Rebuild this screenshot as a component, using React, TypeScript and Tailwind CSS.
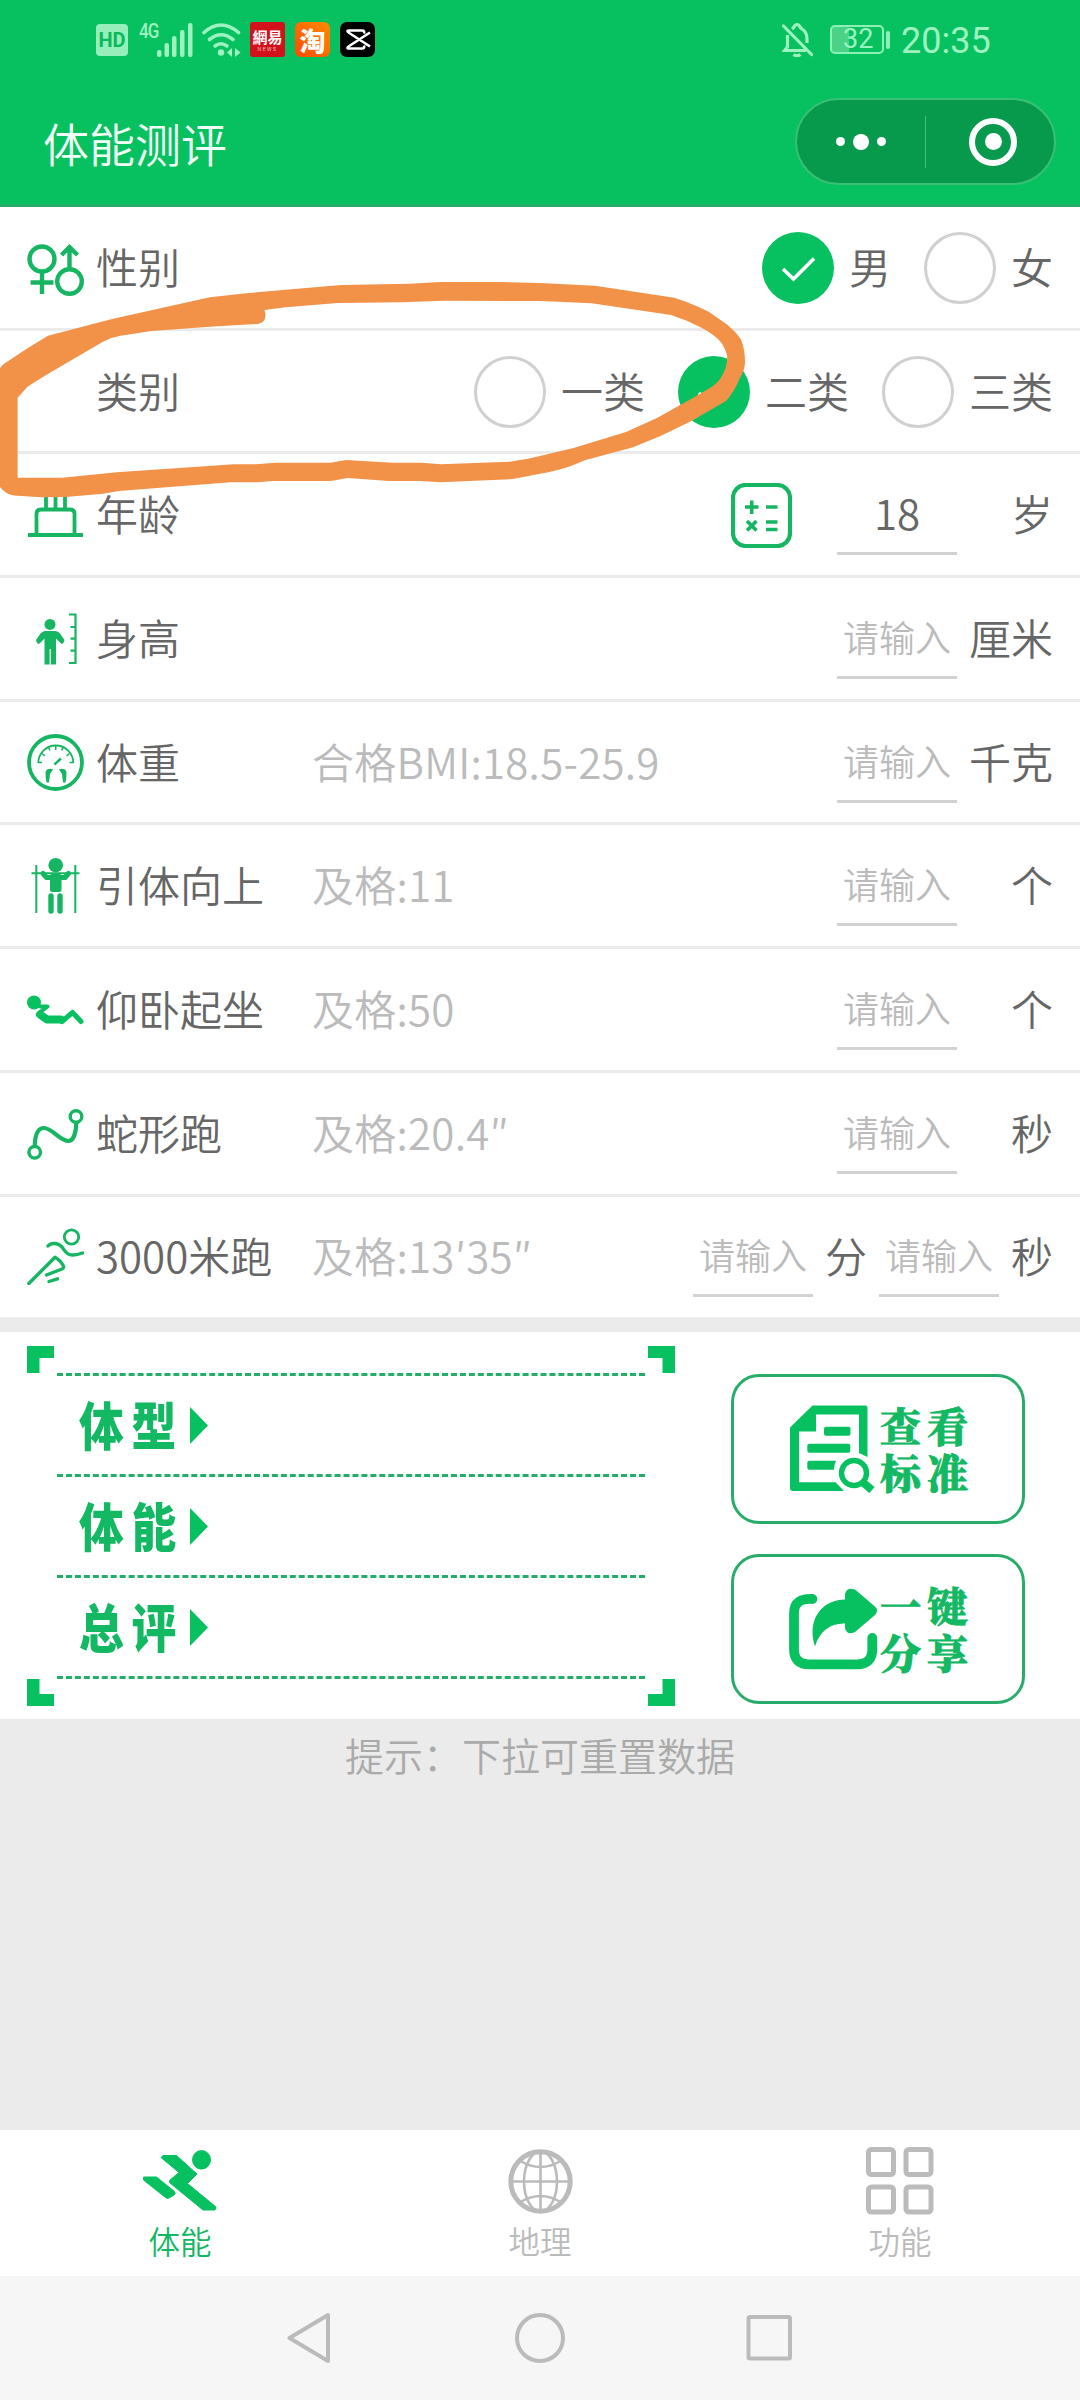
import { useState } from 'react'
import type { ReactNode } from 'react'

const GREEN = '#07c160'
const ICON_GREEN = '#16b562'

export default function App() {
  const [gender, setGender] = useState('男')
  const [category, setCategory] = useState('二类')

  return (
    <div className="relative flex h-[2400px] w-[1080px] flex-col overflow-hidden bg-[#ebebeb] font-['Noto_Sans_CJK_SC',sans-serif] text-[42px] leading-none font-[350] text-[#666]">
      <Header />

      {/* Form */}
      <div className="flex flex-col bg-white">
        <Row icon={<GenderIcon />} label="性别">
          <RadioGroup options={['男', '女']} value={gender} onChange={setGender} />
        </Row>
        <Row label="类别">
          <RadioGroup options={['一类', '二类', '三类']} value={category} onChange={setCategory} />
        </Row>
        <Row icon={<CakeIcon />} label="年龄">
          <CalculatorIcon />
          <Field value="18" />
          <Unit>岁</Unit>
        </Row>
        <Row icon={<HeightIcon />} label="身高">
          <Field />
          <Unit>厘米</Unit>
        </Row>
        <Row icon={<ScaleIcon />} label="体重" hint="合格BMI:18.5-25.9">
          <Field />
          <Unit>千克</Unit>
        </Row>
        <Row icon={<PullUpIcon />} label="引体向上" hint="及格:11">
          <Field />
          <Unit>个</Unit>
        </Row>
        <Row icon={<SitUpIcon />} label="仰卧起坐" hint="及格:50">
          <Field />
          <Unit>个</Unit>
        </Row>
        <Row icon={<SnakeIcon />} label="蛇形跑" hint="及格:20.4″">
          <Field />
          <Unit>秒</Unit>
        </Row>
        <Row icon={<RunIcon />} label="3000米跑" hint="及格:13′35″" last>
          <Field />
          <span className="mx-3 -mt-[3px]">分</span>
          <Field />
          <span className="-mt-[3px] ml-3">秒</span>
        </Row>
      </div>

      {/* Result + actions */}
      <div className="mt-[15px] flex h-[387px] items-start bg-white pt-3.5 pl-[27px]">
        <ResultPanel />
        <div className="mt-7 ml-14 flex flex-col gap-[30px]">
          <ActionButton icon={<DocumentIcon />} label="查看标准" />
          <ActionButton icon={<ShareIcon />} label="一键分享" />
        </div>
      </div>

      <p className="mt-[15px] text-center text-[39px] leading-[40px] text-[#aaa]">提示：下拉可重置数据</p>

      {/* Tab bar */}
      <div className="mt-auto grid h-[146px] shrink-0 grid-cols-3 bg-white text-[31.5px] text-[#bbb]">
        <Tab icon={<SprintIcon />} label="体能" active />
        <Tab icon={<GlobeIcon />} label="地理" />
        <Tab icon={<GridIcon />} label="功能" />
      </div>

      <SystemNav />
      <Scribble />
    </div>
  )
}

// ── Header ──────────────────────────────────────────────────────────────────

function Header() {
  return (
    <div className="flex h-[207px] shrink-0 flex-col border-b-[3px] border-[#25ad66] bg-[#07c160]">
      <div className="flex h-[79px] items-center pl-24 text-[#9df2c0]">
        <div className="flex h-8 w-8 items-center justify-center rounded-[4px] bg-[#96efba] font-['Roboto',sans-serif] text-[20px] font-bold text-[#0ab95c]">
          HD
        </div>
        <div className="ml-[11px] flex h-[34px] items-start">
          <span className="w-[18px] origin-left scale-x-[0.85] font-['Roboto',sans-serif] text-[20px] leading-[16px] font-medium tracking-[-1px]">
            4G
          </span>
          <svg width="36" height="34" viewBox="0 0 36 34" fill="currentColor">
            <rect x="0" y="27" width="4.5" height="7" rx="2" />
            <rect x="7.5" y="20" width="4.5" height="14" rx="2" />
            <rect x="15" y="13" width="4.5" height="21" rx="2" />
            <rect x="23" y="7" width="4.5" height="27" rx="2" />
            <rect x="31" y="0" width="4.5" height="34" rx="2" />
          </svg>
        </div>
        <svg className="ml-[9px]" width="40" height="34" viewBox="0 0 40 34" fill="none" stroke="currentColor" strokeWidth="3.6" strokeLinecap="round">
          <path d="M2 9.500Q19 -5.500 36.500 9.500" />
          <path d="M7.500 16.500Q19 7 31 16.500" />
          <path d="M13 23Q19 18.500 25 23" />
          <circle cx="19" cy="29.500" r="3.200" fill="currentColor" stroke="none" />
          <path d="M30 25V34L25 29.500ZM33 34V25L38.500 29.500Z" fill="currentColor" stroke="none" />
        </svg>
        <div className="ml-2 flex h-[35px] w-[35px] flex-col items-center justify-center rounded-[3px] bg-[#d2111b] text-white">
          <span className="text-[15px] leading-[18px] font-bold">網易</span>
          <span className="font-['Roboto',sans-serif] text-[5px] leading-[6px] tracking-[1.500px]">NEWS</span>
        </div>
        <div className="ml-2.5 flex h-[35px] w-[35px] items-center justify-center rounded-[6px] bg-gradient-to-tr from-[#ff4800] to-[#ff8a00] text-[26px] leading-[30px] font-black text-white">
          淘
        </div>
        <div className="ml-2.5 flex h-[35px] w-[35px] items-center justify-center rounded-[7px] bg-black">
          <svg width="27" height="21" viewBox="0 0 27 21" fill="none" stroke="#fff" strokeWidth="2.6" strokeLinejoin="round">
            <path d="M26 3.500L6 16.500Q1.500 19.500 5 19.500H18Q21 19.500 20 16.500M26 17.500L6 4.500Q1.500 1.500 5 1.500H18Q21 1.500 20 4.500" />
          </svg>
        </div>

        <svg className="ml-[407px]" width="31" height="34" viewBox="0 0 31 34" fill="none" stroke="currentColor" strokeWidth="3.2">
          <path d="M1.500 3L29.500 31.500" strokeLinecap="round" />
          <path d="M5.500 12V24L2.500 27.500H24" />
          <path d="M10 6Q12 4.500 12.500 3Q15 0 17.500 3Q18 4.500 20 6Q25 9 25 16V20" />
          <path d="M11.500 31.500Q15 34 18.500 31.500" />
        </svg>
        <div className="ml-[17px] flex h-[29px] w-[54px] items-center rounded-[5px] border-2 border-[#8df0b4] bg-gradient-to-r from-[#4ad287] from-35% to-transparent to-35% pl-[11px] font-['Roboto',sans-serif] text-[27px] font-normal">
          32
        </div>
        <div className="ml-0.5 h-[18px] w-[4px] rounded-[2px] bg-[#8df0b4]" />
        <span className="ml-[11px] pt-0.5 font-['Roboto',sans-serif] text-[36px] font-normal">20:35</span>
      </div>

      <div className="flex h-[125px] items-center justify-between pr-6 pl-[43px]">
        <h1 className="text-[46px] text-[#f2fff7]">体能测评</h1>
        <div className="flex h-[87px] w-[261px] items-center rounded-full border-2 border-[#38c075] bg-[#079a4c]">
          <div className="flex w-[128px] items-center justify-center gap-[8px]">
            <span className="h-[9px] w-[9px] rounded-full bg-white" />
            <span className="h-4 w-4 rounded-full bg-white" />
            <span className="h-[9px] w-[9px] rounded-full bg-white" />
          </div>
          <div className="h-[52px] w-px bg-[#4fb87e]" />
          <div className="ml-[43px] flex h-12 w-12 items-center justify-center rounded-full border-[6px] border-white">
            <span className="h-[17px] w-[17px] rounded-full bg-white" />
          </div>
        </div>
      </div>
    </div>
  )
}

// ── Form rows ───────────────────────────────────────────────────────────────

interface RowProps {
  icon?: ReactNode
  label: string
  hint?: string
  last?: boolean
  children: ReactNode
}

function Row({ icon, label, hint, last, children }: RowProps) {
  return (
    <div
      className={
        last
          ? 'flex h-[120.600px] items-center px-[27px]'
          : 'flex h-[123.700px] items-center border-b-[3px] border-[#ebebeb] px-[27px]'
      }
    >
      <div className="h-[57px] w-[57px]">{icon}</div>
      <span className="-mt-[3px] ml-3 w-[216px] whitespace-nowrap">{label}</span>
      <span className="-mt-[3px] tracking-[0.25px] whitespace-nowrap text-[#bbb]">{hint}</span>
      <div className="ml-auto flex items-center">{children}</div>
    </div>
  )
}

interface RadioGroupProps {
  options: string[]
  value: string
  onChange: (value: string) => void
}

function RadioGroup({ options, value, onChange }: RadioGroupProps) {
  return (
    <div className="flex gap-[33px] pt-0.5">
      {options.map((option) => (
        <button key={option} onClick={() => onChange(option)} className="flex items-center gap-[15px]">
          {option === value ? (
            <span className="h-[72px] w-[72px] rounded-full bg-[#07c160]">
              <svg width="72" height="72" viewBox="0 0 72 72" fill="none" stroke="#fff" strokeWidth="3.6">
                <path d="M21 37L31.500 47L52 26.500" />
              </svg>
            </span>
          ) : (
            <span className="h-[72px] w-[72px] rounded-full border-[3px] border-[#d0d0d0]" />
          )}
          <span className="-mt-1">{option}</span>
        </button>
      ))}
    </div>
  )
}

function Field({ value }: { value?: string }) {
  return (
    <div className="mt-px flex h-20 w-[120px] items-center justify-center border-b-[3px] border-[#d2d2d2] pb-[3px]">
      {value ? <span>{value}</span> : <span className="text-[36px] text-[#bbb]">请输入</span>}
    </div>
  )
}

function Unit({ children }: { children: ReactNode }) {
  return <span className="-mt-[3px] ml-3 w-[84px] text-right whitespace-nowrap">{children}</span>
}

// ── Results ─────────────────────────────────────────────────────────────────

function ResultPanel() {
  return (
    <div className="relative w-[648px] px-[30px] pt-[27px] pb-7">
      <svg className="absolute top-0 left-0" width="648" height="360" viewBox="0 0 648 360" fill={GREEN}>
        <path d="M0 0H27V12H12.500V27H0Z" />
        <path d="M648 0H621V12H635.500V27H648Z" />
        <path d="M0 360H27V348H12.500V333H0Z" />
        <path d="M648 360H621V348H635.500V333H648Z" />
      </svg>
      <div className="border-t-[3px] border-dashed border-[#22ad68]">
        {['体型', '体能', '总评'].map((name) => (
          <div key={name} className="flex h-[101px] items-center border-b-[3px] border-dashed border-[#22ad68] pl-[22px]">
            <span className="-mt-0.5 w-[100px] origin-left scale-x-[0.86] text-[52px] font-black tracking-[9px] whitespace-nowrap text-[#12b862]">
              {name}
            </span>
            <svg className="ml-[11px]" width="18" height="37" viewBox="0 0 18 37" fill={GREEN}>
              <path d="M0 0L18 18.500L0 37Z" />
            </svg>
          </div>
        ))}
      </div>
    </div>
  )
}

function ActionButton({ icon, label }: { icon: ReactNode; label: string }) {
  return (
    <button className="flex h-[150px] w-[294px] items-center rounded-[28px] border-[3px] border-[#27ad69] pl-[52px]">
      <div className="flex w-[94px] justify-center">{icon}</div>
      {/* two characters per line */}
      <span className="-mt-0.5 w-[102px] text-left font-['Noto_Serif_CJK_SC','Noto_Sans_CJK_SC',sans-serif] text-[41px] leading-[47px] font-black tracking-[6px] text-[#12b862] [-webkit-text-stroke:0.8px_#12b862]">
        {label}
      </span>
    </button>
  )
}

// ── Bottom bars ─────────────────────────────────────────────────────────────

function Tab({ icon, label, active }: { icon: ReactNode; label: string; active?: boolean }) {
  return (
    <div className={active ? 'flex flex-col items-center pt-4 text-[#14b765]' : 'flex flex-col items-center pt-4'}>
      <div className="flex h-[70px] items-center">{icon}</div>
      <span className="mt-[9px]">{label}</span>
    </div>
  )
}

function SystemNav() {
  return (
    <div className="flex h-[124px] shrink-0 items-center bg-[#f6f6f6] pl-[287px]">
      <svg width="506" height="52" viewBox="0 0 506 52" fill="none" stroke="#bbb" strokeWidth="4" strokeLinejoin="round">
        <path d="M41 3L2.500 26L41 49Z" />
        <circle cx="253" cy="26" r="23" />
        <rect x="461.500" y="5" width="41.500" height="41.500" rx="1.500" />
      </svg>
    </div>
  )
}

// ── Icons ───────────────────────────────────────────────────────────────────

function RowSvg({ children, width = 4 }: { children: ReactNode; width?: number }) {
  return (
    <svg width="57" height="57" viewBox="0 0 57 57" fill="none" stroke={ICON_GREEN} strokeWidth={width}>
      {children}
    </svg>
  )
}

function GenderIcon() {
  return (
    <RowSvg width={4.4}>
      <circle cx="15" cy="20" r="12.500" />
      <path d="M15 32V55M3.600 43.500H26.500" />
      <circle cx="42.500" cy="42.500" r="12.300" />
      <path d="M42.500 30V8M34.500 16L42.500 8L50.500 16" />
    </RowSvg>
  )
}

function CakeIcon() {
  return (
    <RowSvg width={3.8}>
      <path d="M1 49H56M9.500 49V28Q9.500 23.500 14 23.500H43Q47.500 23.500 47.500 28V49M19 23V8M28.500 23V8M38 23V8" />
    </RowSvg>
  )
}

function HeightIcon() {
  return (
    <RowSvg width={2.2}>
      <circle cx="23" cy="14.400" r="5.500" fill={ICON_GREEN} stroke="none" />
      <path
        d="M18 21H28.500Q31 21 33 23.500L37.500 30Q37 33.500 34.500 34L29 28.500V54.500H23.800V39H22.600V54.500H17.500V28.500L12 34Q9.500 33.500 9 30L13.500 23.500Q15.500 21 18 21Z"
        fill={ICON_GREEN}
        stroke="none"
      />
      <path d="M42 4.500H48.500V53H42M43.500 17H48M43.500 28.700H48M43.500 40.700H48" />
    </RowSvg>
  )
}

function ScaleIcon() {
  return (
    <RowSvg width={3.8}>
      <circle cx="28.500" cy="28.500" r="26.500" />
      <path d="M11.300 29A17.500 17.500 0 0 1 46.300 29" strokeWidth="1.800" />
      <path d="M11 28.500H15M42.500 28.500H46.500M15 19.500L18 22M42.500 19.500L39.500 22M21.500 13.500L23 16.500M36 13.500L34.500 16.500M28.700 12V16" strokeWidth="1.500" />
      <path d="M27.500 30.500L34 24.500" strokeWidth="2.400" />
      <path d="M20 35.500Q24 34 26 35.500L23 40L22 48.500H19.500Q18.500 44 18.500 38ZM38 35.500Q34 34 32 35.500L35 40L36 48.500H38.500Q39.500 44 39.500 38Z" fill={ICON_GREEN} stroke="none" />
    </RowSvg>
  )
}

function PullUpIcon() {
  return (
    <RowSvg width={2}>
      <path d="M9.300 8V56M48.300 8V56M4.500 16.200H52.500" />
      <circle cx="28.700" cy="8.200" r="7.300" fill={ICON_GREEN} stroke="none" />
      <path d="M16 16.500L19.500 20.500H38L41.500 16.500" strokeWidth="5" strokeLinecap="round" strokeLinejoin="round" />
      <rect x="23" y="17" width="11.500" height="18" rx="2" fill={ICON_GREEN} stroke="none" />
      <path d="M24 39V54M33 39V54" strokeWidth="5.400" strokeLinecap="round" />
    </RowSvg>
  )
}

function SitUpIcon() {
  return (
    <RowSvg width={5}>
      <g stroke={GREEN} strokeLinecap="round" strokeLinejoin="round">
        <circle cx="7" cy="21.500" r="7" fill={GREEN} stroke="none" />
        <path d="M13 25.500H20.500L12 32" strokeWidth="4" />
        <path d="M13 33.500L20 38.500H34" strokeWidth="8" />
        <path d="M35 40.500L45.500 31.500L54 40.500" />
      </g>
    </RowSvg>
  )
}

function SnakeIcon() {
  return (
    <RowSvg width={3.4}>
      <circle cx="49" cy="11.500" r="5.800" />
      <circle cx="7.700" cy="47.300" r="5.800" />
      <path d="M7.700 41C8 30 11 23 17 23C25 23 33 36 41.500 36C47 36 49 26 49.300 18" strokeWidth="4.200" />
    </RowSvg>
  )
}

function RunIcon() {
  return (
    <RowSvg width={3.4}>
      <g strokeLinecap="round" strokeLinejoin="round">
        <circle cx="44.500" cy="9" r="7.200" strokeWidth="2.800" />
        <path d="M21 18C24 14.500 31 14.500 35 19C39 25 42 30 55.500 25" />
        <path d="M1.800 55.500L28 29.300Q33 32 36.500 38Q37 40 35 41L19.500 47" />
        <path d="M22 53.500L30.500 50.800" />
      </g>
    </RowSvg>
  )
}

function CalculatorIcon() {
  return (
    <svg className="mt-[2px] mr-[45px]" width="61" height="65" viewBox="0 0 61 65" fill="none" stroke={ICON_GREEN} strokeWidth="3.600">
      <rect x="2" y="2" width="57" height="61" rx="12.500" strokeWidth="4.200" />
      <path d="M14 24H27.500M20.700 17.500V31M35 24H46.500M35 39H46.500M35 46.500H46.500M16 38L25.500 47.500M25.500 38L16 47.500" />
    </svg>
  )
}

function DocumentIcon() {
  return (
    <svg width="86" height="88" viewBox="0 0 86 88" fill={GREEN}>
      <path d="M22.500 0.500H75Q77.500 0.500 77.500 3V52L69 48V9.500H26V26.500H9V77.300H45.500L54 86H3Q0 86 0 83V22.500Z" />
      <rect x="34" y="21.700" width="26.500" height="9" rx="2" />
      <rect x="17.300" y="38.700" width="43" height="9" rx="2" />
      <path d="M19.300 55.700H46Q44 60 44 64.700H19.300Q17.300 64.700 17.300 62.700V57.700Q17.300 55.700 19.300 55.700Z" />
      <circle cx="64" cy="68" r="12.500" fill="none" stroke={GREEN} strokeWidth="5.400" />
      <path d="M73 77.500L82 85" stroke={GREEN} strokeWidth="8" />
    </svg>
  )
}

function ShareIcon() {
  return (
    <svg width="89" height="82" viewBox="0 0 89 82" fill={GREEN}>
      <path
        d="M23.500 11C12 10.500 5 14 5 25V61Q5 76.300 20 76.300H68Q83.300 76.300 83.300 61V50"
        fill="none"
        stroke={GREEN}
        strokeWidth="9.800"
        strokeLinecap="round"
      />
      <path d="M56 11.500V6Q58 -1.500 66 1.500L86 18.500Q90 22.500 86 27L66 44Q58 48 56 40V35.500C41 35 30 44 26 58.500C18 35 30 12 56 11.500Z" />
    </svg>
  )
}

function SprintIcon() {
  return (
    <svg width="74" height="62" viewBox="0 0 74 62" fill={GREEN} stroke={GREEN} strokeWidth="1" strokeLinejoin="round">
      <ellipse cx="58.500" cy="9.800" rx="9" ry="9.300" />
      <path d="M18 7.500L20 5.500H33.500L54 24L44.500 33.500L73 57L72 60H60L27 33Q26 31.500 27 30L36 22.600Z" />
      <path d="M0.500 27H13.500L31.500 41.500Q33 43.500 31 45L26 48Q24 49 22.500 47.500L0.500 30Z" />
    </svg>
  )
}

function GlobeIcon() {
  return (
    <svg width="65" height="65" viewBox="0 0 65 65" fill="none" stroke="#bbb" strokeWidth="2.600">
      <circle cx="32.500" cy="32.500" r="29.700" strokeWidth="5" />
      <ellipse cx="32.500" cy="32.500" rx="16.500" ry="30" />
      <path d="M32.500 3V62M3 32.500H62M12.500 12Q32.500 24 52.500 12M12.500 53Q32.500 41 52.500 53" />
    </svg>
  )
}

function GridIcon() {
  return (
    <svg width="68" height="68" viewBox="0 0 68 68" fill="none" stroke="#bbb" strokeWidth="5">
      <rect x="2.500" y="2.500" width="25" height="25" rx="3" />
      <rect x="40" y="2.500" width="25" height="25" rx="3" />
      <rect x="2.500" y="40" width="25" height="25" rx="3" />
      <rect x="40" y="40" width="25" height="25" rx="3" />
    </svg>
  )
}

// Hand-drawn marker loop over the category row
function Scribble() {
  return (
    <svg className="pointer-events-none absolute top-[270px] left-0" width="760" height="240" viewBox="0 270 760 240" fill="#f29148">
      <path
        fillRule="evenodd"
        d="M264.500 310Q267 318 263 322L258 324L213.500 326.500L151.500 331L120.500 335.700Q112 337 103 341.700L44.800 375.700L27.500 386.700L17.600 397.700V477.700H62L117 472.300L234 464.300H256L275.500 462.700H330.600L346 460L392.600 462.700H421.800L440.800 464.300L509.600 461.700Q525 460 540 456L574.400 447.700L626 432L657 418L695 396.700L712 386.700Q719 382 722.500 375Q728 365 727 355Q724 345 719 340Q713 334 702 328Q687 320 671 315L591.700 303.300L540 301L444 300.700L403 302.300L337.500 303L286 307.300ZM246 293.300L210 297.300L112 319L48 335.700L27.500 348.300L3.400 364.300L-2 370V484Q4 494 13.800 495.500L41 497.300L65.400 497L103 493.700L118.800 491L230.700 482.300H258L272 481H330.600L347.800 478L389 481H420L440.800 482.300L513 479L540 473.700Q557 471 571 466L584.800 460.300L633 447.300L660.500 436L691.500 421L726 401Q735 391 739.700 378.300Q745 370 745 361.700Q745 349 740.800 339Q735 331 727.700 325L708.700 311.700Q691 303 674.300 297.700L595 285.700L540 283L500 282H440.800L409.800 283.700L341 285Z"
      />
    </svg>
  )
}
